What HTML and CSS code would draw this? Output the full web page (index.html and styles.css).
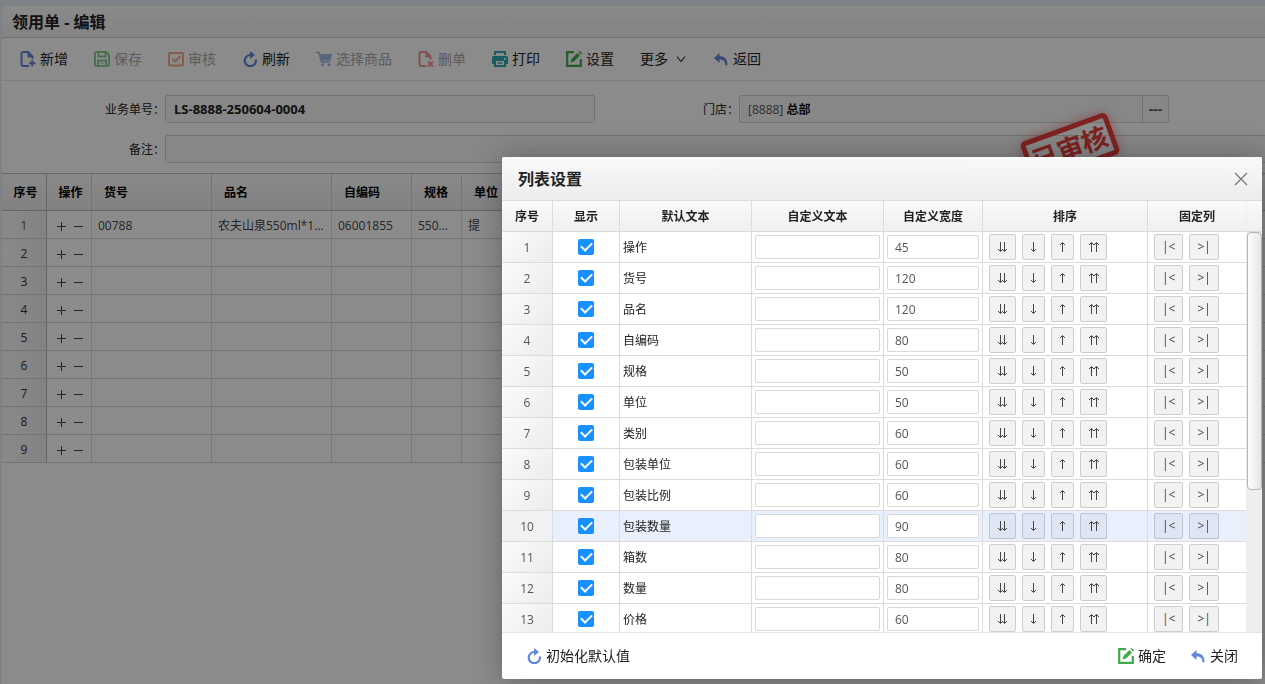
FILE: index.html
```html
<!DOCTYPE html>
<html lang="zh-CN">
<head>
<meta charset="utf-8">
<title>领用单 - 编辑</title>
<link rel="stylesheet" href="styles.css">
</head>
<body>
<svg class="sprite" aria-hidden="true">
  <symbol id="i-add" viewBox="0 0 16 16"><path d="M9 15H3.2A1.7 1.7 0 0 1 1.500 13.300V2.700A1.700 1.700 0 0 1 3.200 1H8l4.500 4.500V8" fill="none" stroke="currentColor" stroke-width="2"/><path d="M7.500 0v6.500H13V5.500L8.500 0zM11.200 9h2v2.200h2.300v2h-2.300v2.300h-2v-2.300H9v-2h2.200z" fill="currentColor"/></symbol>
  <symbol id="i-save" viewBox="0 0 16 16"><path d="M1 2.500A1.500 1.500 0 0 1 2.500 1h9.800L15 3.700v9.800a1.500 1.500 0 0 1-1.500 1.500h-11A1.500 1.500 0 0 1 1 13.500zM4.500 1v4.500h7V1M4 15V9.500h8V15" fill="none" stroke="currentColor" stroke-width="2"/><path d="M6 12h4" stroke="currentColor"/></symbol>
  <symbol id="i-check" viewBox="0 0 16 16"><rect x="1" y="2" width="14" height="12.500" rx="1" fill="none" stroke="currentColor" stroke-width="2"/><path d="M4 7.500l3 3 5.500-5.500" fill="none" stroke="currentColor" stroke-width="2"/></symbol>
  <symbol id="i-refresh" viewBox="0 0 16 16"><path d="M13.800 8.500A5.600 5.600 0 1 1 8.500 4h2" fill="none" stroke="currentColor" stroke-width="2.200"/><path d="M8 0l5 4-5 4z" fill="currentColor"/></symbol>
  <symbol id="i-cart" viewBox="0 0 16 16"><path d="M0 1.500h3L5.500 11h8.500" fill="none" stroke="currentColor" stroke-width="1.600"/><path d="M4.500 3H16l-1.500 6.500h-9z" fill="currentColor"/><circle cx="6.500" cy="13.800" r="1.500" fill="currentColor"/><circle cx="13" cy="13.800" r="1.500" fill="currentColor"/></symbol>
  <symbol id="i-del" viewBox="0 0 16 16"><path d="M8.500 15H3.200A1.700 1.700 0 0 1 1.500 13.300V2.700A1.700 1.700 0 0 1 3.200 1H8l4.500 4.500V8.500" fill="none" stroke="currentColor" stroke-width="2"/><path d="M7.500 0v6.500H13V5.500L8.500 0z" fill="currentColor"/><path d="M10 10.500l5 5M15 10.500l-5 5" stroke="currentColor" stroke-width="2"/></symbol>
  <symbol id="i-print" viewBox="0 0 16 16"><path d="M3 4V1h10v3" fill="none" stroke="currentColor" stroke-width="2"/><path fill-rule="evenodd" d="M1.500 5h13A1.500 1.500 0 0 1 16 6.500V13h-2v3H2v-3H0V6.500A1.500 1.500 0 0 1 1.500 5zM4 10v4h8v-4zM12 7v1.500h2V7z" fill="currentColor"/><path d="M5.500 12h5" stroke="currentColor" stroke-width="1.500"/></symbol>
  <symbol id="i-edit" viewBox="0 0 16 16"><path d="M8 1.200H1.200v13.600h13.600V8" fill="none" stroke="currentColor" stroke-width="2.200"/><path d="M4.500 11.500l1-3.700L11.500 2 14 4.500 8 10.500zM12.500 1l1-1L16 2.300l-1 1.200z" fill="currentColor"/></symbol>
  <symbol id="i-back" viewBox="0 0 16 16"><path d="M1 7L6.500 2v3.200c5 0 8 2.500 8 9h-2.200c0-4.200-2-5.700-5.800-5.700V12z" fill="currentColor"/></symbol>
  <symbol id="i-down" viewBox="0 0 12 12"><path d="M2 3.500l4 5 4-5" fill="none" stroke="currentColor" stroke-width="1.200"/></symbol>
  <symbol id="i-close" viewBox="0 0 14 14"><path d="M1 1l12 12M13 1L1 13" fill="none" stroke="currentColor" stroke-width="1.300"/></symbol>
  <symbol id="i-plus" viewBox="0 0 10 10"><path d="M5.500 1v9M1 5.500h9" stroke="currentColor"/></symbol>
  <symbol id="i-minus" viewBox="0 0 10 10"><path d="M1 5.500h9" stroke="currentColor"/></symbol>
  <symbol id="i-bottom" viewBox="0 0 11 10"><path d="M3.500 0v9M1 7l2.500 2.500L6 7M7.500 0v9M5 7l2.500 2.500L10 7" fill="none" stroke="currentColor"/></symbol>
  <symbol id="i-lower" viewBox="0 0 7 10"><path d="M3.500 0v9M1 7l2.500 2.500L6 7" fill="none" stroke="currentColor"/></symbol>
  <symbol id="i-raise" viewBox="0 0 7 10"><path d="M3.500 1v9M1 3L3.500.5 6 3" fill="none" stroke="currentColor"/></symbol>
  <symbol id="i-top" viewBox="0 0 11 10"><path d="M3.500 1v9M1 3L3.500.5 6 3M8.500 1v9M6 3L8.500.5 11 3" fill="none" stroke="currentColor"/></symbol>
</svg>

<main class="page">
  <h1 class="page-title">领用单 - 编辑</h1>
  <nav class="toolbar">
    <button class="tool blue"><svg><use href="#i-add"/></svg><span>新增</span></button>
    <button class="tool green" disabled><svg><use href="#i-save"/></svg><span>保存</span></button>
    <button class="tool orange" disabled><svg><use href="#i-check"/></svg><span>审核</span></button>
    <button class="tool blue"><svg><use href="#i-refresh"/></svg><span>刷新</span></button>
    <button class="tool blue" disabled><svg><use href="#i-cart"/></svg><span>选择商品</span></button>
    <button class="tool red" disabled><svg><use href="#i-del"/></svg><span>删单</span></button>
    <button class="tool teal"><svg><use href="#i-print"/></svg><span>打印</span></button>
    <button class="tool green"><svg><use href="#i-edit"/></svg><span>设置</span></button>
    <button class="tool more"><span>更多</span><svg><use href="#i-down"/></svg></button>
    <button class="tool blue"><svg><use href="#i-back"/></svg><span>返回</span></button>
  </nav>
  <form class="form">
    <label for="no">业务单号：</label>
    <input id="no" class="box strong" value="LS-8888-250604-0004" readonly>
    <label for="store">门店：</label>
    <div class="box picker"><output id="store">[8888] <b>总部</b></output><button type="button" aria-label="选择门店">---</button></div>
    <label for="user">经办人：</label>
    <input id="user" class="box" readonly>
    <label for="memo">备注：</label>
    <input id="memo" class="box wide" readonly>
  </form>
  <table class="items">
    <colgroup><col class="w45"><col class="w45"><col class="w120"><col class="w120"><col class="w80"><col class="w50"><col class="w50"><col></colgroup>
    <thead><tr><th>序号</th><th>操作</th><th>货号</th><th>品名</th><th>自编码</th><th>规格</th><th>单位</th><th></th></tr></thead>
    <tbody id="items"></tbody>
  </table>
  <div class="stamp">已审核</div>
</main>
<div class="mask"></div>

<section class="dialog" role="dialog" aria-labelledby="dlg-title">
  <header class="dialog-head">
    <h2 id="dlg-title">列表设置</h2>
    <button aria-label="关闭窗口"><svg><use href="#i-close"/></svg></button>
  </header>
  <div class="dialog-body">
    <table class="config">
      <colgroup><col class="c-no"><col class="c-show"><col class="c-text"><col class="c-text"><col class="c-width"><col class="c-sort"><col></colgroup>
      <thead><tr><th>序号</th><th>显示</th><th>默认文本</th><th>自定义文本</th><th>自定义宽度</th><th>排序</th><th>固定列</th></tr></thead>
      <tbody id="config"></tbody>
    </table>
    <div class="scroll"><div class="corner"></div><div class="thumb"></div></div>
  </div>
  <footer class="dialog-foot">
    <button class="tool blue"><svg><use href="#i-refresh"/></svg><span>初始化默认值</span></button>
    <button class="tool green push"><svg><use href="#i-edit"/></svg><span>确定</span></button>
    <button class="tool blue"><svg><use href="#i-back"/></svg><span>关闭</span></button>
  </footer>
</section>
<script src="script.js"></script>
</body>
</html>
```
FILE: styles.css
```css
* { box-sizing: border-box; }
body {
  margin: 0;
  height: 100vh;
  padding: 6px 0 0 2px;
  overflow: hidden;
  background: #e7ebf9;
  color: #222;
  font: 12px/18px "Open Sans", "Noto Sans CJK SC", sans-serif;
}
button, input { font: inherit; color: inherit; }
button { border: 0; background: none; padding: 0; }
h1, h2 { margin: 0; font-size: 16px; font-weight: 700; }
.sprite { position: absolute; width: 0; height: 0; }

.page { position: relative; height: 100%; background: #fdfdfd; overflow: hidden; }
.page-title {
  height: 32px;
  padding-left: 10px;
  line-height: 33px;
  border-bottom: 1px solid #d0d0d0;
  background: linear-gradient(#fbfbfb, #efefef);
}
.toolbar {
  display: flex;
  align-items: center;
  gap: 26px;
  height: 43px;
  padding-left: 18px;
  border-bottom: 1px solid #e6e6e6;
}
.tool { display: flex; align-items: center; gap: 4px; font-size: 14px; line-height: 20px; white-space: nowrap; }
.tool svg { width: 16px; height: 16px; }
.tool span { color: #222; }
.tool:disabled svg { opacity: .6; }
.tool:disabled span { color: #a8a8a8; }
.blue { color: #6488d9; }
.green { color: #3fab4a; }
.orange { color: #f0743c; }
.red { color: #e84a50; }
.teal { color: #32a8b4; }
.more { gap: 7px; color: #333; }
.more svg { width: 12px; height: 12px; }

.form {
  display: grid;
  grid-template-columns: 163px 430px 144px 430px 144px 430px;
  row-gap: 12px;
  padding: 14px 0 10px;
  overflow: hidden;
}
.form label { line-height: 30px; height: 28px; text-align: right; }
.box {
  height: 28px;
  width: 430px;
  padding: 0 8px;
  border: 1px solid #cfcfcf;
  border-radius: 2px;
  background: #f6f6f6;
}
.strong { font-weight: 700; font-size: 13px; }
.wide { grid-column: 2 / -1; width: auto; }
.picker { display: flex; justify-content: space-between; padding-right: 0; line-height: 28px; color: #555; }
.picker b { color: #111; }
.picker button { width: 26px; height: 26px; border-left: 1px solid #cfcfcf; font-size: 14px; line-height: 24px; font-weight: 700; }

.items { width: 1500px; table-layout: fixed; border-collapse: separate; border-spacing: 0; border-top: 1px solid #bdbdbd; }
.items .w45 { width: 45px; }
.items .w120 { width: 120px; }
.items .w80 { width: 80px; }
.items .w50 { width: 50px; }
.items th {
  height: 37px;
  padding: 2px 12px 0;
  text-align: left;
  white-space: nowrap;
  color: #000;
  background: linear-gradient(#fafafa, #ececec);
  border-right: 1px solid #d0d3d6;
  border-bottom: 1px solid #b8b8b8;
}
.items td {
  height: 28px;
  padding: 2px 6px 0;
  overflow: hidden;
  white-space: nowrap;
  text-overflow: ellipsis;
  color: #444;
  border-right: 1px solid #d9dcdf;
  border-bottom: 1px solid #d0d2d4;
}
.items th:first-child, .items td:first-child { text-align: center; border-right-color: #b8b8b8; }
.items th:nth-child(-n+2) { padding: 2px 0 0 3px; text-align: center; }
.items td:first-child { background: linear-gradient(90deg, #fafafa, #efefef); color: #333; }
.items tr:first-child td:first-child { color: #8a5a20; }
.ops { display: flex; gap: 7px; justify-content: center; }
.ops svg { display: block; width: 10px; height: 10px; }

.stamp {
  position: absolute;
  left: 1022px;
  top: 120px;
  width: 92px;
  height: 44px;
  border: 5px solid #e83c3c;
  border-radius: 5px;
  color: #e83c3c;
  font-size: 26px;
  line-height: 34px;
  font-weight: 700;
  text-align: center;
  transform: rotate(-20deg);
  box-shadow: 0 0 12px rgba(232, 60, 60, .5);
}

.mask { position: fixed; inset: 0; background: rgba(0, 0, 0, .45); }

.dialog {
  position: fixed;
  right: 3px;
  bottom: 5px;
  width: 760px;
  height: 522px;
  display: flex;
  flex-direction: column;
  border-radius: 2px;
  background: #fff;
  box-shadow: 1px 1px 30px rgba(0, 0, 0, .3);
}
.dialog-head {
  display: flex;
  align-items: center;
  justify-content: space-between;
  flex: 0 0 43px;
  padding: 0 14px 0 16px;
  border-radius: 2px 2px 0 0;
  background: linear-gradient(#f9f9f9, #ededed);
}
.dialog-head button { color: #777; }
.dialog-head svg { display: block; width: 14px; height: 14px; }
.dialog-body { flex: 1; display: flex; min-height: 0; overflow: hidden; border-bottom: 1px solid #e6e6e6; }

.config { flex: 1; align-self: flex-start; width: 0; table-layout: fixed; border-collapse: separate; border-spacing: 0; }
.c-no { width: 51px; }
.c-show { width: 67px; }
.c-text { width: 132px; }
.c-width { width: 99px; }
.c-sort { width: 165px; }
.config th, .corner {
  height: 32px;
  padding: 2px 0 0;
  background: linear-gradient(#fafafa, #efefef);
  border: solid #dcdcdc;
  border-width: 1px 1px 1px 0;
}
.config td { height: 31px; padding: 0 3px; border: solid #dcdcdc; border-width: 0 1px 1px 0; }
.config td:first-child { text-align: center; color: #555; background: linear-gradient(135deg, #fbfbfb, #ececec); }
.config td:nth-child(1), .config td:nth-child(3) { padding-top: 2px; }
.config th:last-child, .config td:last-child { border-right-color: #eee; }
.config .on td { background: #e8f0fe; }
.config .on td:first-child { background: #f0f1f3; }
.config input[type="text"] {
  display: block;
  width: 100%;
  height: 24px;
  padding: 0 7px;
  border: 1px solid #d9d9d9;
  border-radius: 2px;
  background: #fff;
  color: #555;
}
.config input[type="checkbox"] {
  appearance: none;
  display: grid;
  place-items: center;
  width: 16px;
  height: 16px;
  margin: 0 auto;
  border-radius: 2px;
  background: #1890ff;
}
.config input[type="checkbox"]::after {
  content: "";
  width: 9px;
  height: 5px;
  margin-bottom: 3px;
  border: solid #fff;
  border-width: 0 0 2px 2px;
  transform: rotate(-45deg);
}
.btns { display: flex; gap: 6px; padding-left: 3px; }
.btns button {
  height: 26px;
  padding: 0 7px;
  border: 1px solid #cdcdcd;
  border-radius: 2px;
  background: #f2f2f2;
  color: #444;
}
.btns svg { display: block; width: 7px; height: 10px; }
.btns .pair svg { width: 11px; }
.on .btns button { background: #dee6f3; border-color: #bcc4d1; }

.scroll { flex: 0 0 15px; background: #eee; }
.corner { border-right: 0; }
.thumb {
  height: 258px;
  border: 1px solid #b4b4b4;
  border-radius: 4px;
  background: linear-gradient(90deg, #fdfdfd, #e6e6e6);
}
.dialog-foot { flex: 0 0 46px; display: flex; align-items: center; gap: 24px; padding: 0 24px; }
.push { margin-left: auto; }
```
FILE: script.js
```js
const icon = (id, cls = '') =>
  `<button class="${cls}" aria-label="${id}"><svg><use href="#i-${id}"/></svg></button>`;

const first = ['00788', '农夫山泉550ml*12瓶', '06001855', '550ml*12', '提', ''];
document.getElementById('items').innerHTML = Array.from({ length: 9 }, (_, i) =>
  `<tr><td>${i + 1}</td><td><div class="ops">${icon('plus')}${icon('minus')}</div></td>` +
  first.map(t => `<td>${i ? '' : t}</td>`).join('') + '</tr>').join('');

const columns = [
  ['操作', 45], ['货号', 120], ['品名', 120], ['自编码', 80], ['规格', 50],
  ['单位', 50], ['类别', 60], ['包装单位', 60], ['包装比例', 60], ['包装数量', 90],
  ['箱数', 80], ['数量', 80], ['价格', 60]
];
const sorts = icon('bottom', 'pair') + icon('lower') + icon('raise') + icon('top', 'pair');
document.getElementById('config').innerHTML = columns.map(([name, width], i) => `
  <tr class="${i === 9 ? 'on' : ''}">
    <td>${i + 1}</td>
    <td><input type="checkbox" checked aria-label="显示${name}"></td>
    <td>${name}</td>
    <td><input type="text" aria-label="${name}自定义文本"></td>
    <td><input type="text" value="${width}" aria-label="${name}自定义宽度"></td>
    <td><div class="btns">${sorts}</div></td>
    <td><div class="btns"><button>|&lt;</button><button>&gt;|</button></div></td>
  </tr>`).join('');
```
